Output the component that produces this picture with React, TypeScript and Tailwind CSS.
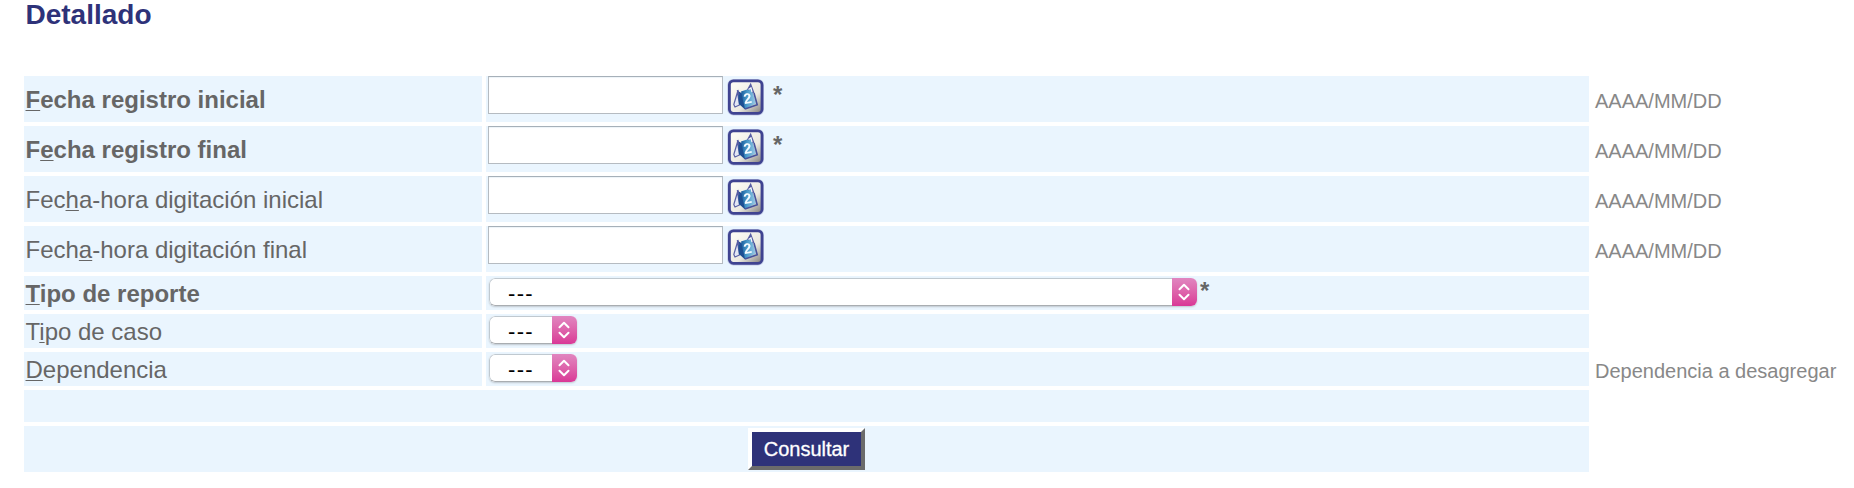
import React, { ReactNode } from "react";

function CalendarIcon() {
  return (
    <svg width="38" height="38" viewBox="0 0 38 38" className="block">
      <defs>
        <linearGradient id="tile" x1="0.2" y1="0.1" x2="1" y2="1">
          <stop offset="0" stopColor="#fbfaf3" />
          <stop offset="0.55" stopColor="#ebe9e1" />
          <stop offset="1" stopColor="#7d7b78" />
        </linearGradient>
        <linearGradient id="page" x1="0" y1="0.5" x2="1" y2="0.6">
          <stop offset="0" stopColor="#1c5f9f" />
          <stop offset="0.4" stopColor="#4a9bcb" />
          <stop offset="1" stopColor="#9ccbe6" />
        </linearGradient>
        <filter id="soft" x="-10%" y="-10%" width="120%" height="120%">
          <feGaussianBlur stdDeviation="0.6" />
        </filter>
      </defs>
      <rect x="0.3" y="1" width="36.7" height="36.6" rx="6" fill="#9fa4d2" opacity="0.55" filter="url(#soft)" />
      <rect x="2.4" y="2.9" width="32.6" height="32.4" rx="4" fill="url(#tile)" stroke="#3f4391" strokeWidth="2.8" />
      <g filter="url(#soft)">
        <path d="M10.5 14 L6.8 26.5 L8 29 L12.5 27 Z" fill="#e4e8f4" stroke="#5961a5" strokeWidth="1.2" />
        <path d="M10.8 13 L12 26 L18 31.5 L18 17 Z" fill="#1f4f93" />
        <path d="M14 13.5 L24.5 10 L29 25.5 L18 31 Z" fill="url(#page)" />
        <path d="M18 31 L30.2 26.8 L27 15" fill="none" stroke="#47539c" strokeWidth="1.6" />
        <path d="M10.6 12 L11.6 17 M20.8 12 L23.6 7 L26.6 15" fill="none" stroke="#555ca3" strokeWidth="1.8" />
        <path d="M21.5 11.5 L24 10 L25 14" fill="none" stroke="#f4f6fa" strokeWidth="1.2" />
        <text x="16.5" y="25.5" fontSize="14.5" fontWeight="700" fill="#f4fbff" fontFamily="Liberation Sans, sans-serif" transform="rotate(-10 20 20)">2</text>
      </g>
    </svg>
  );
}

function Key({ children }: { children: ReactNode }) {
  return <span className="underline decoration-1 underline-offset-[2px] [text-decoration-skip-ink:none]">{children}</span>;
}

function Star({ className }: { className: string }) {
  return <span className={`text-2xl leading-7 font-bold text-[#666666] ${className}`}>*</span>;
}

function Row({ label, bold, hint, height, children }: { label: ReactNode; bold?: boolean; hint?: string; height: string; children: ReactNode }) {
  return (
    <div className={`grid grid-cols-[458px_1103px_1fr] gap-1 ${height}`}>
      <div className={`flex items-center bg-[#eaf5fe] pt-0.5 pl-[1.5px] text-2xl leading-7 text-[#666666] ${bold ? "font-bold" : ""}`}>
        <span>{label}</span>
      </div>
      <div className="flex items-start bg-[#eaf5fe] pl-0.5">{children}</div>
      <div className="flex items-center pt-1 pl-0.5 text-xl leading-6 whitespace-nowrap text-[#888888]">{hint}</div>
    </div>
  );
}

function DateField({ required, name }: { required?: boolean; name: string }) {
  return (
    <>
      <input aria-label={name} className="h-[38px] w-[235px] border border-[#b5bbc1] border-t-[#a6b0b9] bg-white px-1 text-xl shadow-[inset_0_1px_1px_#edf3f8] outline-none" />
      <button type="button" className="mt-0.5 ml-1"><CalendarIcon /></button>
      {required && <Star className="mt-[5px] ml-2" />}
    </>
  );
}

function Picker({ width }: { width: string }) {
  return (
    <button type="button" className={`mt-0.5 ml-px flex h-7 overflow-hidden rounded-md bg-white shadow-[0_1px_2px_#00000030] ${width}`}>
      <span className="h-7 flex-1 rounded-l-md border border-r-0 border-[#c0c9d0] border-b-[#a9adb1] pl-[18px] text-left text-[22px] leading-[30px] tracking-[1.3px] text-black">---</span>
      <span className="flex h-7 w-[25px] items-center justify-center bg-linear-to-b from-[#e086c0] to-[#d93796] pr-px">
        <svg width="12" height="18" viewBox="0 0 12 18" fill="none" stroke="white" strokeWidth="2" strokeLinecap="round" strokeLinejoin="round">
          <path d="M1.5 6.2 L6 1.8 L10.5 6.2 M1.5 11.8 L6 16.2 L10.5 11.8" />
        </svg>
      </span>
    </button>
  );
}

export default function App() {
  return (
    <main className="h-[488px] bg-white pl-6 font-['Liberation_Sans',Arial,sans-serif]">
      <h1 className="h-[76px] pl-[1.5px] text-[28px] leading-[30px] font-bold text-[#2e3279]">Detallado</h1>
      <form className="flex flex-col gap-1">
        <Row height="h-[46px]" bold hint="AAAA/MM/DD" label={<><Key>F</Key>echa registro inicial</>}>
          <DateField required name="Fecha registro inicial" />
        </Row>
        <Row height="h-[46px]" bold hint="AAAA/MM/DD" label={<>F<Key>e</Key>cha registro final</>}>
          <DateField required name="Fecha registro final" />
        </Row>
        <Row height="h-[46px]" hint="AAAA/MM/DD" label={<>Fec<Key>h</Key>a-hora digitación inicial</>}>
          <DateField name="Fecha-hora digitación inicial" />
        </Row>
        <Row height="h-[46px]" hint="AAAA/MM/DD" label={<>Fech<Key>a</Key>-hora digitación final</>}>
          <DateField name="Fecha-hora digitación final" />
        </Row>
        <Row height="h-[34px]" bold label={<><Key>T</Key>ipo de reporte</>}>
          <Picker width="w-[708px]" />
          <Star className="mt-px ml-[3px]" />
        </Row>
        <Row height="h-[34px]" label={<>T<Key>i</Key>po de caso</>}>
          <Picker width="w-[88px]" />
        </Row>
        <Row height="h-[34px]" hint="Dependencia a desagregar" label={<><Key>D</Key>ependencia</>}>
          <Picker width="w-[88px]" />
        </Row>
        <div className="h-8 w-[1565px] bg-[#eaf5fe]" />
        <div className="flex h-[46px] w-[1565px] items-start justify-center bg-[#eaf5fe] pt-0.5">
          <button type="button" className="h-[42px] w-[117px] border-4 border-t-white border-r-[#6b6b6b] border-b-[#6b6b6b] border-l-white bg-[#2e3279] text-xl leading-8 text-white [-webkit-text-stroke:0.3px_white]">Consultar</button>
        </div>
      </form>
    </main>
  );
}
